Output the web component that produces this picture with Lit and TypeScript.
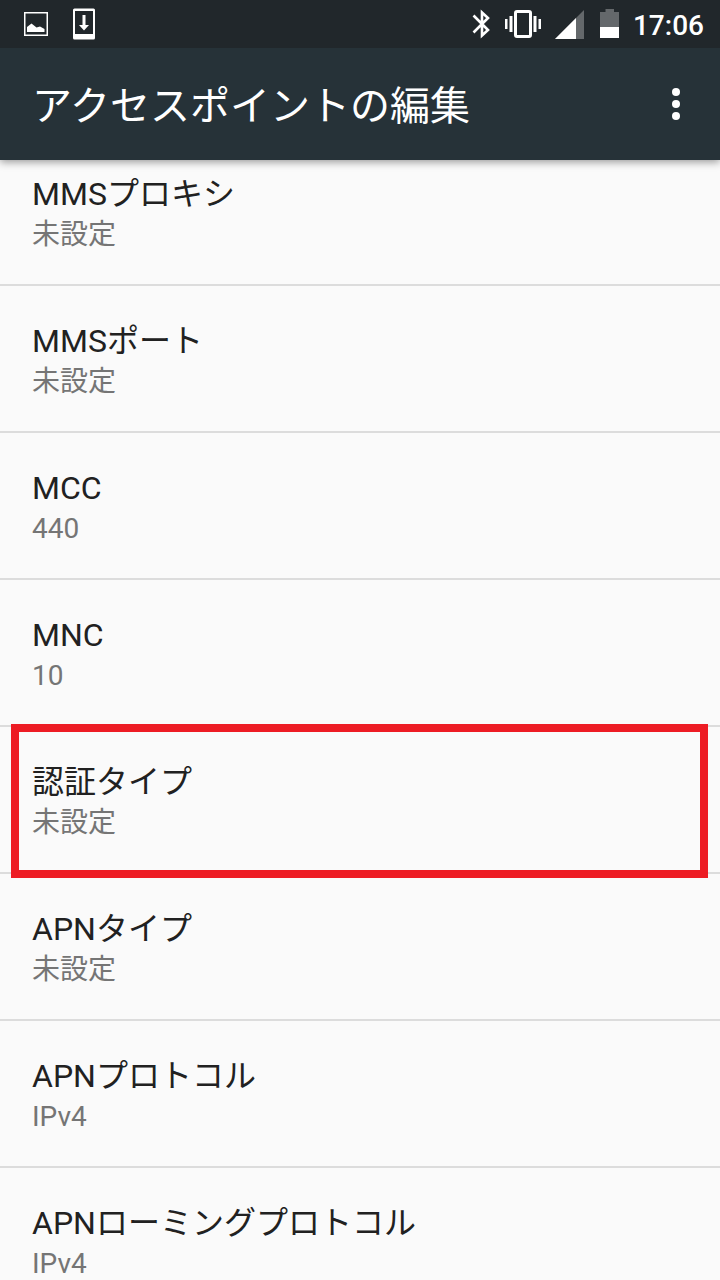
import { LitElement, html, css } from "lit";
import { customElement } from "lit/decorators.js";
import { classMap } from "lit/directives/class-map.js";

interface Setting {
  title: string;
  summary: string;
  marked?: boolean;
}

const SETTINGS: Setting[] = [
  { title: "MMSプロキシ", summary: "未設定" },
  { title: "MMSポート", summary: "未設定" },
  { title: "MCC", summary: "440" },
  { title: "MNC", summary: "10" },
  { title: "認証タイプ", summary: "未設定", marked: true },
  { title: "APNタイプ", summary: "未設定" },
  { title: "APNプロトコル", summary: "IPv4" },
  { title: "APNローミングプロトコル", summary: "IPv4" },
];

@customElement("status-bar")
export class StatusBar extends LitElement {
  static styles = css`
    :host {
      display: flex;
      align-items: center;
      justify-content: space-between;
      height: 48px;
      padding: 0 16px 0 24px;
      background: #21272b;
      color: #fff;
    }
    .group {
      display: flex;
      align-items: center;
    }
    .notices {
      gap: 24px;
    }
    .system {
      gap: 14px;
    }
    svg {
      display: block;
    }
    .time {
      font-size: 28px;
      line-height: 44px;
      font-weight: 500;
      padding-top: 4px;
    }
  `;

  render() {
    return html`
      <div class="group notices">
        <svg width="24" height="24" viewBox="0 0 24 24" aria-hidden="true">
          <rect x="0.75" y="0.75" width="22.5" height="22.5" fill="none" stroke="#fff" stroke-width="1.5" />
          <path d="M3 20V15L7.500 11.500L12.500 15.500L16 14.500L20.500 17V20Z" fill="#fff" />
        </svg>
        <svg width="24" height="32" viewBox="0 0 24 32" aria-hidden="true">
          <path d="M2.500 0.500H21.500Q23 0.500 23 2V30Q23 31.500 21.500 31.500H2.500Q1 31.500 1 30V2Q1 0.500 2.500 0.500ZM3 3V26H21V3Z" fill="#fff" fill-rule="evenodd" />
          <path d="M10.500 7H13.500V17H17L12 22.500L7 17H10.500Z" fill="#fff" />
        </svg>
      </div>
      <div class="group system">
        <svg width="19" height="30" viewBox="0 0 19 30" aria-hidden="true">
          <path d="M1.500 6.500L16 21L10 26.500V3.500L16 9L1.500 23.500" fill="none" stroke="#fff" stroke-width="2.600" />
        </svg>
        <svg width="36" height="28" viewBox="0 0 36 28" aria-hidden="true">
          <rect x="10.500" y="1.500" width="15" height="25" rx="1.500" fill="none" stroke="#fff" stroke-width="3" />
          <path d="M0 9H2.500V19H0ZM4.500 6H7.500V22H4.500ZM28.500 6H31.500V22H28.500ZM33.500 9H36V19H33.500Z" fill="#fff" />
        </svg>
        <svg width="31" height="29" viewBox="0 0 31 29" aria-hidden="true">
          <path d="M0 29L29 0V29Z" fill="#64686b" />
          <path d="M0 29L21 8V29Z" fill="#fff" />
        </svg>
        <svg width="19" height="30" viewBox="0 0 19 30" aria-hidden="true">
          <path d="M0 3H5.500V0H14V3H19V18H0Z" fill="#64686b" />
          <path d="M0 18H19V29H0Z" fill="#fff" />
        </svg>
        <time class="time">17:06</time>
      </div>
    `;
  }
}

@customElement("app-toolbar")
export class AppToolbar extends LitElement {
  static styles = css`
    :host {
      display: flex;
      align-items: center;
      justify-content: space-between;
      height: 112px;
      padding: 0 24px 0 32px;
      background: #263238;
      color: #fff;
    }
    .title {
      margin: 0;
      padding-top: 6px;
      font-size: 40px;
      line-height: 48px;
      font-weight: 400;
    }
    .more {
      display: flex;
      align-items: center;
      justify-content: center;
      width: 40px;
      height: 64px;
      padding: 0;
      border: 0;
      background: none;
      color: inherit;
    }
  `;

  render() {
    return html`
      <h1 class="title">アクセスポイントの編集</h1>
      <button class="more" type="button" aria-label="その他のオプション">
        <svg width="8" height="32" viewBox="0 0 8 32" fill="currentColor">
          <circle cx="4" cy="4" r="4" />
          <circle cx="4" cy="16" r="4" />
          <circle cx="4" cy="28" r="4" />
        </svg>
      </button>
    `;
  }
}

@customElement("app-root")
export class AppRoot extends LitElement {
  static styles = css`
    :host {
      display: flex;
      flex-direction: column;
      height: 100vh;
      overflow: hidden;
      background: #fafafa;
      color: #212121;
      font-family: Roboto, "Noto Sans CJK JP", sans-serif;
    }
    .top {
      position: relative;
      z-index: 2;
      flex: none;
      box-shadow: 0 2px 8px rgba(0, 0, 0, 0.4);
    }
    .content {
      flex: 1;
      min-height: 0;
      overflow: hidden;
    }
    /* The list rests slightly scrolled beneath the toolbar. */
    .list {
      list-style: none;
      margin: -21px 0 0;
      padding: 0;
    }
    .item {
      position: relative;
      border-bottom: 2px solid #dcdcdc;
    }
    .marked::after {
      content: "";
      position: absolute;
      z-index: 1;
      inset: -3px 12px -6px 11px;
      border: 8px solid #ed1c24;
      pointer-events: none;
    }
    .row {
      display: flex;
      flex-direction: column;
      width: 100%;
      padding: 35px 32px 28px;
      border: 0;
      background: none;
      color: inherit;
      font: inherit;
      text-align: left;
    }
    .name {
      font-size: 32px;
      line-height: 40px;
    }
    .summary {
      font-size: 28px;
      line-height: 42px;
      color: #757575;
    }
  `;

  render() {
    return html`
      <header class="top">
        <status-bar></status-bar>
        <app-toolbar></app-toolbar>
      </header>
      <main class="content">
        <ul class="list">
          ${SETTINGS.map(
            (s) => html`
              <li class=${classMap({ item: true, marked: !!s.marked })}>
                <button class="row" type="button">
                  <span class="name">${s.title}</span>
                  <span class="summary">${s.summary}</span>
                </button>
              </li>
            `
          )}
        </ul>
      </main>
    `;
  }
}
